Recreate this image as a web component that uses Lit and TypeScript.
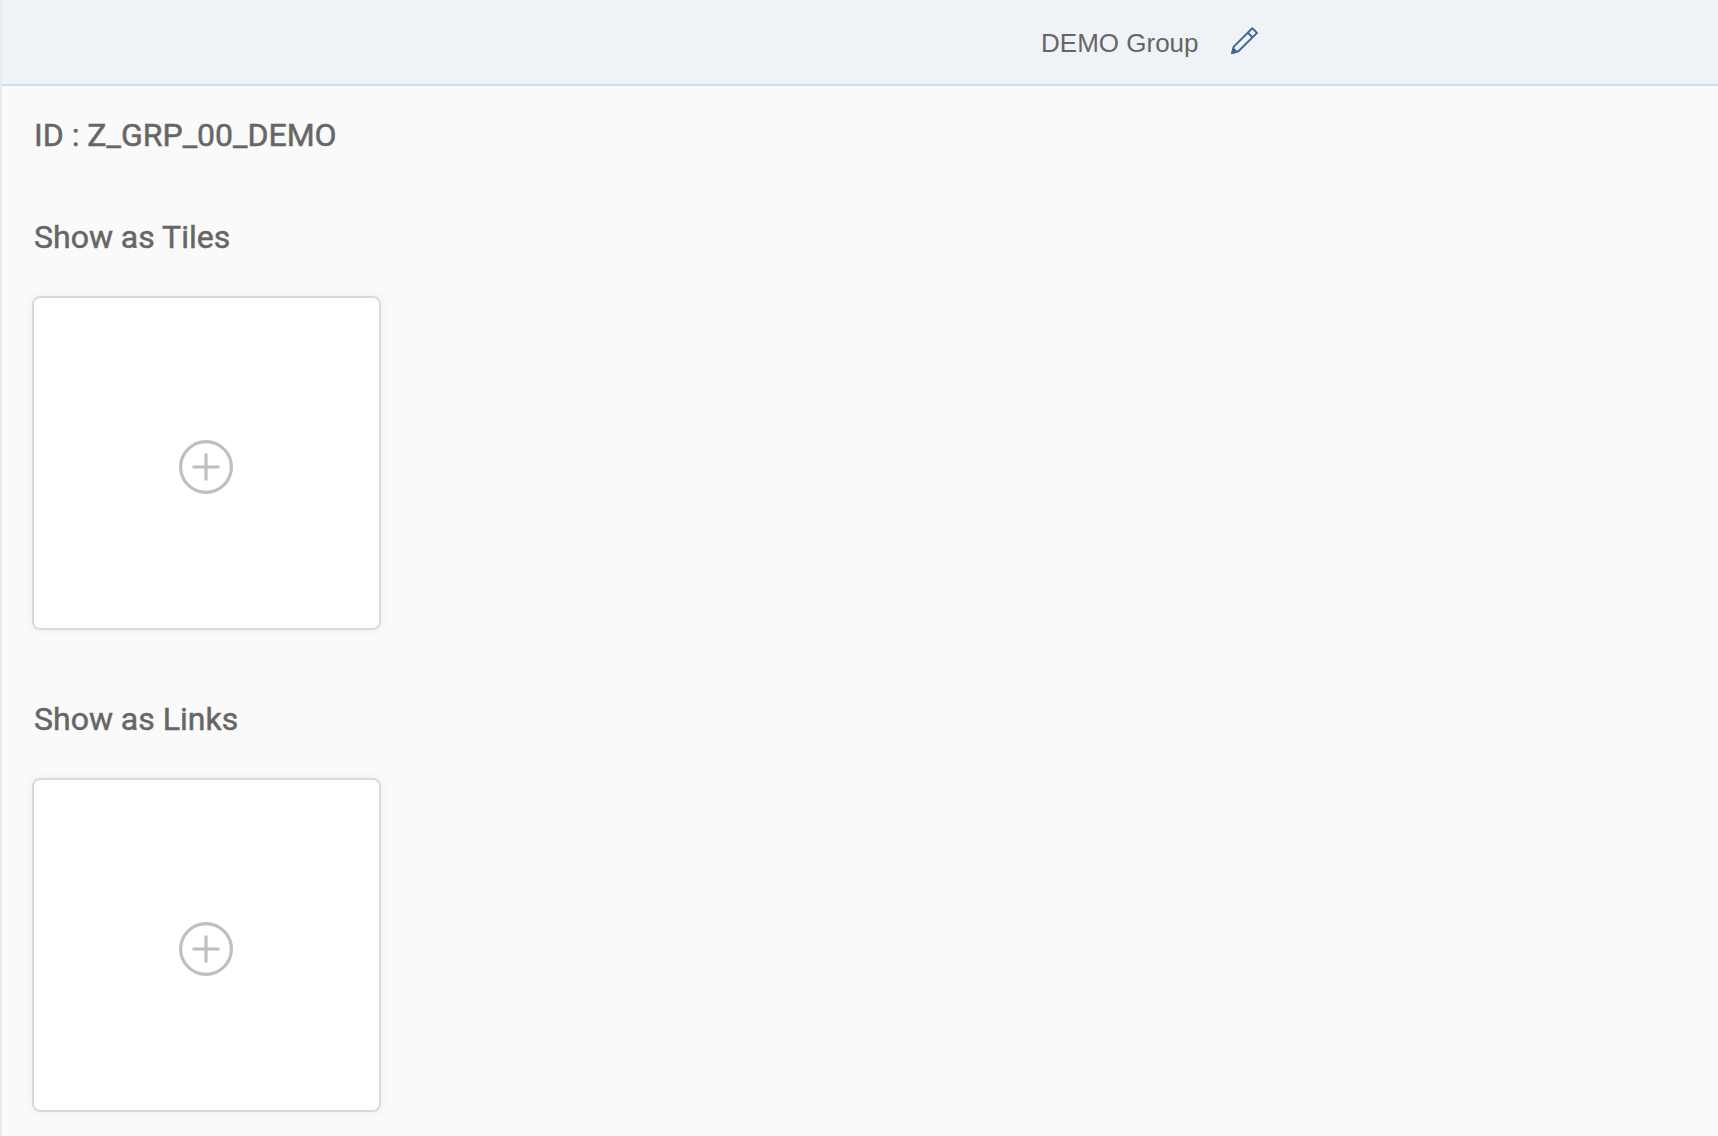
import { LitElement, html, css } from "lit";
import { customElement, property } from "lit/decorators.js";

@customElement("add-card")
class AddCard extends LitElement {
  @property() label = "";

  static styles = css`
    :host {
      display: block;
    }
    .card {
      display: flex;
      align-items: center;
      justify-content: center;
      box-sizing: border-box;
      width: 349px;
      height: 334px;
      margin: 0;
      padding: 8px 2px 0 0;
      border: 2px solid #dadada;
      border-radius: 8px;
      background: #fff;
      background-clip: padding-box;
      box-shadow: 0 0 8px rgba(0, 0, 0, 0.06);
      color: #bfbfbf;
      cursor: pointer;
    }
    .plus {
      display: block;
      width: 54px;
      height: 54px;
    }
  `;

  render() {
    return html`
      <button class="card" type="button" aria-label=${this.label}>
        <svg class="plus" viewBox="0 0 54 54" fill="none" stroke="currentColor" stroke-width="3.2" aria-hidden="true">
          <circle cx="27" cy="27" r="25.4" />
          <path d="M27 13.5v27M13.5 27h27" />
        </svg>
      </button>
    `;
  }
}

@customElement("app-root")
class AppRoot extends LitElement {
  static styles = css`
    :host {
      display: block;
      box-sizing: border-box;
      min-height: 100vh;
      border-left: 2px solid #ebebeb;
      background: #fafafa;
      color: #666;
      font-family: Roboto, "Liberation Sans", sans-serif;
    }
    .bar {
      display: flex;
      align-items: center;
      gap: 24px;
      box-sizing: border-box;
      height: 86px;
      padding-left: 60.55%;
      border-bottom: 2px solid #d1dfee;
      background: #eff3f8;
    }
    .title {
      margin: 0;
      padding-top: 2px;
      font: 400 26px/32px "Liberation Sans", Arial, sans-serif;
    }
    .edit {
      display: block;
      margin: 0;
      padding: 0 8px 4px;
      border: 0;
      background: none;
      color: #426a90;
      cursor: pointer;
    }
    .pencil {
      display: block;
      width: 27px;
      height: 27px;
    }
    .content {
      padding: 30px 30px 24px;
    }
    .heading {
      margin: 0;
      padding-left: 2px;
      font-size: 32px;
      font-weight: 400;
      line-height: 38px;
      -webkit-text-stroke: 0.5px currentColor;
    }
    .section {
      margin-top: 64px;
    }
    .section + .section {
      margin-top: 70px;
    }
    .card-slot {
      margin-top: 40px;
    }
  `;

  render() {
    return html`
      <header class="bar">
        <h1 class="title">DEMO Group</h1>
        <button class="edit" type="button" aria-label="Edit">
          <svg class="pencil" viewBox="0 0 27 27" fill="none" stroke="currentColor" stroke-width="2" stroke-linejoin="round" aria-hidden="true">
            <path d="M21.3 1.2 26 5.9 7.4 24.3 1 26.3 2.8 19.6Z M16.8 5.7 21.4 10.3" />
            <path d="M.3 26.8 2 20 7.2 25Z" fill="currentColor" stroke="none" />
          </svg>
        </button>
      </header>
      <main class="content">
        <h2 class="heading">ID : Z_GRP_00_DEMO</h2>
        ${["Tiles", "Links"].map(
          (kind) => html`
            <section class="section">
              <h2 class="heading">Show as ${kind}</h2>
              <add-card class="card-slot" label="Add"></add-card>
            </section>
          `
        )}
      </main>
    `;
  }
}
